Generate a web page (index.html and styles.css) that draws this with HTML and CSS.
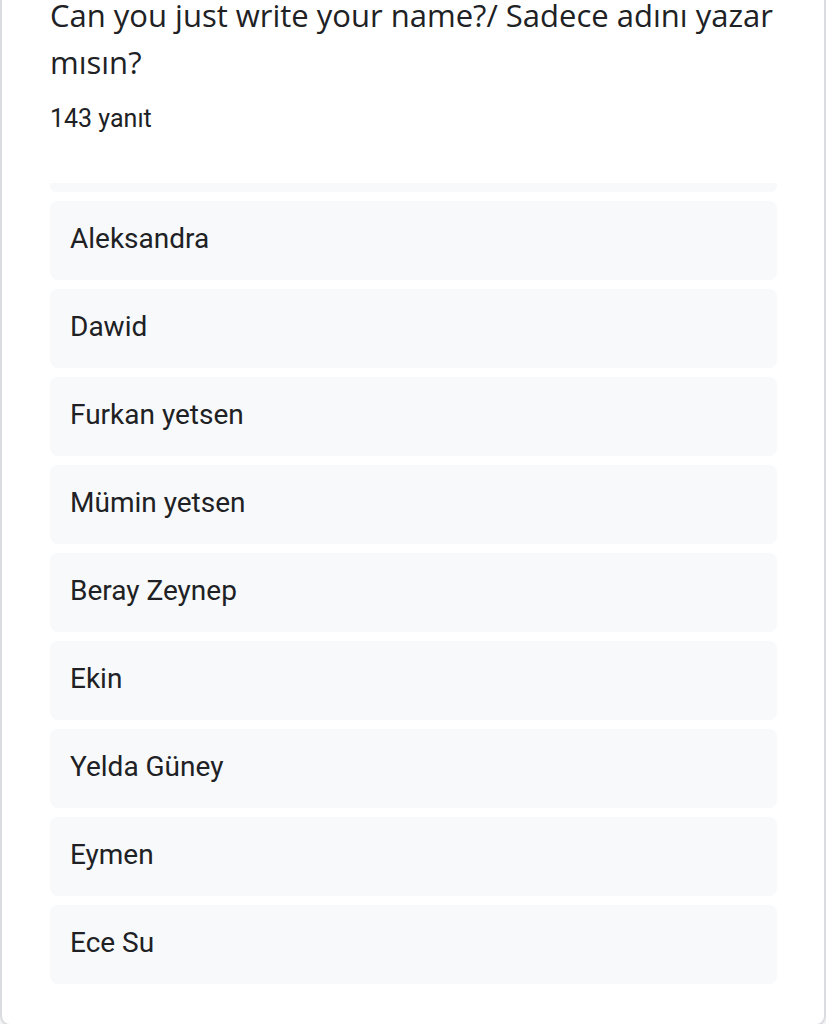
FILE: index.html
```html
<!DOCTYPE html>
<html lang="tr">
<head>
<meta charset="utf-8">
<title>Yanıtlar</title>
<link rel="stylesheet" href="styles.css">
</head>
<body>
<div class="card">
  <div class="title">Can you just write your name?/ Sadece adını yazar mısın?</div>
  <div class="count">143 yanıt</div>
  <div class="list">
    <div class="item item-clipped"></div>
    <div class="item">Aleksandra</div>
    <div class="item">Dawid</div>
    <div class="item">Furkan yetsen</div>
    <div class="item">Mümin yetsen</div>
    <div class="item">Beray Zeynep</div>
    <div class="item">Ekin</div>
    <div class="item">Yelda Güney</div>
    <div class="item">Eymen</div>
    <div class="item">Ece Su</div>
  </div>
</div>
</body>
</html>
```
FILE: styles.css
```css
html, body {
  margin: 0;
  padding: 0;
  background: #f1f3f4;
}
body {
  width: 826px;
  height: 1024px;
  overflow: hidden;
}
.card {
  box-sizing: border-box;
  width: 826px;
  margin-top: -8px;
  background: #ffffff;
  border: 2px solid #dadce0;
  border-top: none;
  border-radius: 0 0 10px 10px;
  padding: 0 47px 40px 48px;
}
.title {
  font-family: "Open Sans", "Noto Sans", sans-serif;
  font-size: 31px;
  line-height: 47px;
  color: #202124;
  width: 740px;
}
.count {
  margin-top: 18px;
  font-family: Roboto, "Liberation Sans", sans-serif;
  font-size: 25px;
  line-height: 30px;
  color: #202124;
}
.list {
  margin-top: 49px;
  display: flex;
  flex-direction: column;
  gap: 9px;
}
.item {
  box-sizing: border-box;
  height: 79px;
  display: flex;
  align-items: center;
  padding-left: 20px;
  padding-bottom: 4px;
  background: #f8f9fa;
  border-radius: 8px;
  font-family: Roboto, "Liberation Sans", sans-serif;
  font-size: 28px;
  color: #202124;
}
.item-clipped {
  height: 9px;
  padding: 0;
  border-radius: 0 0 6px 6px;
}
```
